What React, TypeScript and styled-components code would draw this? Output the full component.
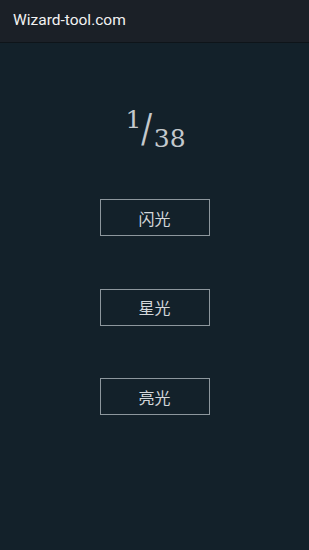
import React from "react";
import styled, { createGlobalStyle } from "styled-components";

const GlobalStyle = createGlobalStyle`
  html, body {
    margin: 0;
    padding: 0;
    background: #13212a;
  }
`;

const modes = ["闪光", "星光", "亮光"];

function App() {
  return (
    <>
      <GlobalStyle />
      <Page>
        <TopBar>
          <Title>Wizard-tool.com</Title>
        </TopBar>
        <Content>
          <Fraction>
            <Sup>1</Sup>
            <Slash>/</Slash>
            <Sub>38</Sub>
          </Fraction>
          <ButtonList>
            {modes.map((m) => (
              <ModeButton key={m}>{m}</ModeButton>
            ))}
          </ButtonList>
        </Content>
      </Page>
    </>
  );
}

export default App;

const Page = styled.div`
  width: 309px;
  height: 550px;
  background: #13212a;
  display: flex;
  flex-direction: column;
  font-family: Roboto, "Noto Sans CJK SC", sans-serif;
`;

const TopBar = styled.header`
  height: 43px;
  background: #1b2027;
  border-bottom: 1px solid #0e1419;
  display: flex;
  align-items: center;
  padding-left: 13px;
  box-sizing: border-box;
`;

const Title = styled.span`
  color: #f2f2f2;
  font-size: 15.5px;
  margin-top: -2px;
`;

const Content = styled.main`
  display: flex;
  flex-direction: column;
  align-items: center;
`;

const Fraction = styled.div`
  margin-top: 64px;
  height: 46px;
  display: flex;
  align-items: flex-start;
  color: #c4c9cd;
  font-family: "DejaVu Serif", "Liberation Serif", serif;
  font-size: 25px;
  margin-left: 2px;
`;

const Sup = styled.span`
  line-height: 1;
`;

const Slash = styled.span`
  font-size: 40px;
  line-height: 1;
  margin-top: 1px;
  margin-left: -1px;
  transform: scaleX(0.8);
`;

const Sub = styled.span`
  line-height: 1;
  margin-top: 19px;
`;

const ButtonList = styled.div`
  margin-top: 46px;
  display: flex;
  flex-direction: column;
  gap: 52.5px;
`;

const ModeButton = styled.button`
  width: 110px;
  height: 37px;
  background: transparent;
  border: 1px solid #8d979d;
  color: #d3d7da;
  font-family: "Noto Sans CJK SC", sans-serif;
  font-size: 16px;
  padding: 0;
  cursor: pointer;
`;
